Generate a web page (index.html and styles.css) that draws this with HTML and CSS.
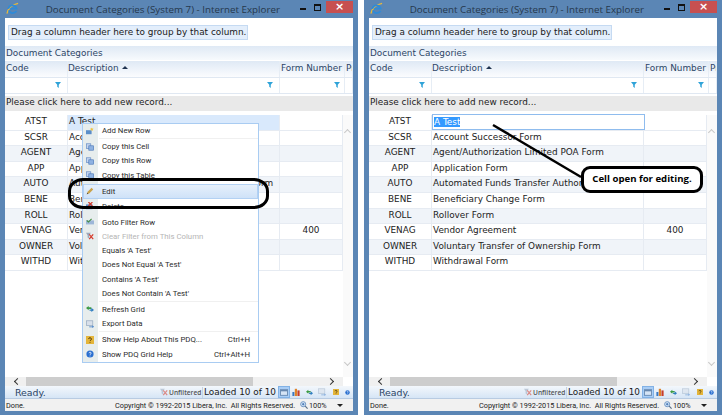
FILE: index.html
```html
<!DOCTYPE html>
<html lang="en">
<head>
  <meta charset="UTF-8" />
  <title>Document Categories</title>
  <link rel="stylesheet" href="styles.css">
</head>
<body>
  <svg class="defs" width="0" height="0">
    <symbol id="ie" viewBox="0 0 14 14">
      <path d="M1 12.5C2 8 6 3 13 1.5" fill="none" stroke="#e8b93a" stroke-width="1.3"/>
      <path d="M2.5 7.5a4.6 4.6 0 0 1 9 -.4H4.5M11.3 9.5a4.6 4.6 0 0 1 -8.3 -.5" fill="none" stroke="#2f8bd8" stroke-width="1.9"/>
    </symbol>
    <symbol id="funnel" viewBox="0 0 7 7">
      <path d="M0 0h7L4.4 3.2V7L2.6 5.6V3.2z" fill="#2fa3d8"/>
    </symbol>
    <symbol id="addrow" viewBox="0 0 10 10">
      <rect x="0" y="4" width="7" height="5" fill="#5b8ec9"/>
      <path d="M7 1l1 1 1.5 .2-1 1 .2 1.4L7 4l-1.2.6.2-1.4-1-1L6.500 2z" fill="#edc443"/>
    </symbol>
    <symbol id="copy" viewBox="0 0 10 10">
      <rect x="0.500" y="1" width="5.500" height="6" fill="#c6d6ee" stroke="#5d86c2" stroke-width=".8"/>
      <rect x="3.500" y="3.500" width="6" height="5.500" fill="#8fb2e2" stroke="#4a76b8" stroke-width=".8"/>
    </symbol>
    <symbol id="pencil" viewBox="0 0 10 10">
      <path d="M1 9l1-3 5-5 2 2-5 5z" fill="#c9a24a"/>
      <path d="M1 9l.6-1.800 1.200 1.200z" fill="#444"/>
    </symbol>
    <symbol id="del" viewBox="0 0 10 10">
      <rect x="0" y="3" width="8" height="6" fill="#5b8ec9"/>
      <path d="M3 0l5 5M8 0L3 5" stroke="#cf3a2a" stroke-width="1.500"/>
    </symbol>
    <symbol id="goto" viewBox="0 0 10 10">
      <rect x="0" y="3" width="10" height="5" fill="#9db7d8"/>
      <path d="M1 3l2 2 4-4" fill="none" stroke="#3c8a3c" stroke-width="1.300"/>
    </symbol>
    <symbol id="clear" viewBox="0 0 10 10">
      <path d="M0 1h6L4 4v4L2 7V4z" fill="#9aa9bd"/>
      <path d="M4 3l5 6M9 3L4 9" stroke="#d63a2a" stroke-width="1.500"/>
    </symbol>
    <symbol id="refresh" viewBox="0 0 9 9">
      <path d="M0 3.500L3 1v1.500h3v2H3V6z" fill="#3d9b45"/>
      <path d="M9 5.500L6 8V6.500H4v-1.500h2V3z" fill="#2f7ec0"/>
    </symbol>
    <symbol id="export" viewBox="0 0 10 10">
      <rect x="0.500" y="1" width="8" height="6" fill="#d8e0ea" stroke="#8fa3bb" stroke-width=".8"/>
      <path d="M4 8h4V6.500L10 8.500 8 10V9H4z" fill="#3a79c4"/>
    </symbol>
    <symbol id="help" viewBox="0 0 10 10">
      <rect x="0" y="0" width="10" height="10" fill="#e4b53a"/>
      <path d="M3.300 3.800A1.700 1.700 0 1 1 5.500 5.500L5 6.300M5 7.400v1" fill="none" stroke="#4a3508" stroke-width="1.200"/>
    </symbol>
    <symbol id="info" viewBox="0 0 10 10">
      <circle cx="5" cy="5" r="4.500" fill="#2a6fd0"/>
      <path d="M3.800 4A1.300 1.300 0 1 1 5.400 5.300L5 6M5 7v1" fill="none" stroke="#fff" stroke-width="1"/>
    </symbol>
    <symbol id="grid" viewBox="0 0 10 8">
      <rect x="0.500" y="0.500" width="9" height="7" fill="#d5e4f5" stroke="#5c7fa8"/>
      <rect x="1" y="1" width="8" height="1.500" fill="#5c7fa8"/>
    </symbol>
    <symbol id="chart" viewBox="0 0 9 10">
      <rect x="0" y="5" width="2.500" height="5" fill="#3a79c4"/>
      <rect x="3" y="1" width="2.800" height="9" fill="#e0832a"/>
      <rect x="6.300" y="3" width="2.700" height="7" fill="#c73d2a"/>
    </symbol>
    <symbol id="zoom" viewBox="0 0 10 10">
      <circle cx="4" cy="4" r="3.200" fill="#d4e5f7" stroke="#5b86bb"/>
      <path d="M2.500 4h3M4 2.500v3" stroke="#2f63a8"/>
      <path d="M6.500 6.500L9.500 9.500" stroke="#5b6f86" stroke-width="1.500"/>
    </symbol>
  </svg>

  <div class="window">
    <div class="titlebar">
      <svg class="ie-logo"><use href="#ie"/></svg>
      <div class="title">Document Categories (System 7) - Internet Explorer</div>
      <div class="win-min"></div>
      <div class="win-max"></div>
      <div class="win-close">×</div>
    </div>
    <div class="client">
      <div class="group-panel"><span class="group-hint">Drag a column header here to group by that column.</span></div>
      <div class="caption">Document Categories</div>
      <div class="cols header">
        <div>Code</div>
        <div>Description <span class="sort"></span></div>
        <div>Form Number</div>
        <div>Pr</div>
      </div>
      <div class="cols filter">
        <div><svg class="funnel"><use href="#funnel"/></svg></div>
        <div><svg class="funnel"><use href="#funnel"/></svg></div>
        <div><svg class="funnel"><use href="#funnel"/></svg></div>
        <div></div>
      </div>
      <div class="add-row">Please click here to add new record...</div>
      <div class="grid-area">
        <div class="rows">
          <div class="cols row"><div class="code">ATST</div><div class="selected">A Test</div><div></div></div>
          <div class="cols row"><div class="code">SCSR</div><div>Account Successor Form</div><div></div></div>
          <div class="cols row alt"><div class="code">AGENT</div><div>Agent/Authorization Limited POA Form</div><div></div></div>
          <div class="cols row"><div class="code">APP</div><div>Application Form</div><div></div></div>
          <div class="cols row alt"><div class="code">AUTO</div><div>Automated Funds Transfer Authorization Form</div><div></div></div>
          <div class="cols row"><div class="code">BENE</div><div>Beneficiary Change Form</div><div></div></div>
          <div class="cols row alt"><div class="code">ROLL</div><div>Rollover Form</div><div></div></div>
          <div class="cols row"><div class="code">VENAG</div><div>Vendor Agreement</div><div class="num">400</div></div>
          <div class="cols row alt"><div class="code">OWNER</div><div>Voluntary Transfer of Ownership Form</div><div></div></div>
          <div class="cols row"><div class="code">WITHD</div><div>Withdrawal Form</div><div></div></div>
        </div>
        <div class="vscroll"><span class="chev up"></span><span class="chev down"></span></div>
        <div class="menu">
          <div class="item"><svg class="mi"><use href="#addrow"/></svg>Add New Row</div>
          <div class="sep"></div>
          <div class="item"><svg class="mi"><use href="#copy"/></svg>Copy this Cell</div>
          <div class="item"><svg class="mi"><use href="#copy"/></svg>Copy this Row</div>
          <div class="item"><svg class="mi"><use href="#copy"/></svg>Copy this Table</div>
          <div class="item hot"><svg class="mi"><use href="#pencil"/></svg>Edit</div>
          <div class="item"><svg class="mi"><use href="#del"/></svg>Delete</div>
          <div class="sep"></div>
          <div class="item"><svg class="mi"><use href="#goto"/></svg>Goto Filter Row</div>
          <div class="item off"><svg class="mi"><use href="#clear"/></svg>Clear Filter from This Column</div>
          <div class="item"><span class="mi"></span>Equals 'A Test'</div>
          <div class="item"><span class="mi"></span>Does Not Equal 'A Test'</div>
          <div class="item"><span class="mi"></span>Contains 'A Test'</div>
          <div class="item"><span class="mi"></span>Does Not Contain 'A Test'</div>
          <div class="sep"></div>
          <div class="item"><svg class="mi"><use href="#refresh"/></svg>Refresh Grid</div>
          <div class="item"><svg class="mi"><use href="#export"/></svg>Export Data</div>
          <div class="sep"></div>
          <div class="item"><svg class="mi"><use href="#help"/></svg>Show Help About This PDQ...<span class="keys">Ctrl+H</span></div>
          <div class="item"><svg class="mi"><use href="#info"/></svg>Show PDQ Grid Help<span class="keys">Ctrl+Alt+H</span></div>
        </div>
        <div class="mark-edit"></div>
      </div>
      <div class="hscroll"><span class="chev left"></span><div class="thumb"></div><span class="chev right"></span></div>
      <div class="statusbar">
        <div class="ready">Ready.</div>
        <svg class="si faded"><use href="#clear"/></svg><span class="unfiltered">Unfiltered</span>
        <span class="loaded">Loaded 10 of 10</span>
        <span class="si-box"><svg class="si-grid"><use href="#grid"/></svg></span>
        <svg class="si"><use href="#chart"/></svg>
        <svg class="si s-refresh"><use href="#refresh"/></svg>
        <svg class="si s-export faded"><use href="#export"/></svg>
        <svg class="si s-help"><use href="#help"/></svg>
        <svg class="si s-info"><use href="#info"/></svg>
      </div>
      <div class="iebar">
        <div class="done">Done.</div>
        <div class="copyright">Copyright © 1992-2015 Libera, Inc.&nbsp; All Rights Reserved.</div>
        <svg class="si zoom"><use href="#zoom"/></svg><span class="zoom-val">100%</span>
        <span class="drop"></span>
        <span class="grip"></span>
      </div>
    </div>
  </div>

  <div class="window">
    <div class="titlebar">
      <svg class="ie-logo"><use href="#ie"/></svg>
      <div class="title">Document Categories (System 7) - Internet Explorer</div>
      <div class="win-min"></div>
      <div class="win-max"></div>
      <div class="win-close">×</div>
    </div>
    <div class="client">
      <div class="group-panel"><span class="group-hint">Drag a column header here to group by that column.</span></div>
      <div class="caption">Document Categories</div>
      <div class="cols header">
        <div>Code</div>
        <div>Description <span class="sort"></span></div>
        <div>Form Number</div>
        <div>Pr</div>
      </div>
      <div class="cols filter">
        <div><svg class="funnel"><use href="#funnel"/></svg></div>
        <div><svg class="funnel"><use href="#funnel"/></svg></div>
        <div><svg class="funnel"><use href="#funnel"/></svg></div>
        <div></div>
      </div>
      <div class="add-row">Please click here to add new record...</div>
      <div class="grid-area">
        <div class="rows">
          <div class="cols row"><div class="code">ATST</div><div class="editor"><span class="picked">A Test</span></div><div></div></div>
          <div class="cols row"><div class="code">SCSR</div><div>Account Successor Form</div><div></div></div>
          <div class="cols row alt"><div class="code">AGENT</div><div>Agent/Authorization Limited POA Form</div><div></div></div>
          <div class="cols row"><div class="code">APP</div><div>Application Form</div><div></div></div>
          <div class="cols row alt"><div class="code">AUTO</div><div>Automated Funds Transfer Authorization Form</div><div></div></div>
          <div class="cols row"><div class="code">BENE</div><div>Beneficiary Change Form</div><div></div></div>
          <div class="cols row alt"><div class="code">ROLL</div><div>Rollover Form</div><div></div></div>
          <div class="cols row"><div class="code">VENAG</div><div>Vendor Agreement</div><div class="num">400</div></div>
          <div class="cols row alt"><div class="code">OWNER</div><div>Voluntary Transfer of Ownership Form</div><div></div></div>
          <div class="cols row"><div class="code">WITHD</div><div>Withdrawal Form</div><div></div></div>
        </div>
        <div class="vscroll"><span class="chev up"></span><span class="chev down"></span></div>
        <svg class="pointer" width="100" height="60"><path d="M2 2L90 54" stroke="#000" stroke-width="2.500"/></svg>
        <div class="callout">Cell open for editing.</div>
      </div>
      <div class="hscroll"><span class="chev left"></span><div class="thumb"></div><span class="chev right"></span></div>
      <div class="statusbar">
        <div class="ready">Ready.</div>
        <svg class="si faded"><use href="#clear"/></svg><span class="unfiltered">Unfiltered</span>
        <span class="loaded">Loaded 10 of 10</span>
        <span class="si-box"><svg class="si-grid"><use href="#grid"/></svg></span>
        <svg class="si"><use href="#chart"/></svg>
        <svg class="si s-refresh"><use href="#refresh"/></svg>
        <svg class="si s-export faded"><use href="#export"/></svg>
        <svg class="si s-help"><use href="#help"/></svg>
        <svg class="si s-info"><use href="#info"/></svg>
      </div>
      <div class="iebar">
        <div class="done">Done.</div>
        <div class="copyright">Copyright © 1992-2015 Libera, Inc.&nbsp; All Rights Reserved.</div>
        <svg class="si zoom"><use href="#zoom"/></svg><span class="zoom-val">100%</span>
        <span class="drop"></span>
        <span class="grip"></span>
      </div>
    </div>
  </div>
</body>
</html>
```

FILE: styles.css
```css
html, body {
  margin: 0;
  padding: 0;
}
body {
  width: 722px;
  height: 416px;
  overflow: hidden;
  background: #fff;
  display: flex;
  justify-content: space-between;
  font-family: "DejaVu Sans", sans-serif;
  font-size: 8.9px;
  color: #222;
}
.defs {
  position: absolute;
}
.window {
  width: 358px;
  height: 415px;
  box-sizing: border-box;
  padding: 0 5px 4px;
  background: #5b86b5;
  display: flex;
  flex-direction: column;
}
.titlebar {
  height: 18px;
  flex: none;
  display: flex;
  align-items: flex-start;
}
.ie-logo {
  width: 13px;
  height: 13px;
  margin: 2px 0 0 1px;
  flex: none;
}
.title {
  width: 265px;
  padding-top: 3px;
  text-align: right;
  font-family: "Open Sans", sans-serif;
  font-size: 9.8px;
  line-height: 13px;
  color: #26384c;
  white-space: nowrap;
}
.win-min {
  width: 6px;
  height: 2px;
  margin: 8px 0 0 20px;
  background: #111;
  flex: none;
}
.win-max {
  width: 5px;
  height: 4px;
  margin: 4px 0 0 8px;
  border: 1px solid #111;
  border-top-width: 2px;
  flex: none;
}
.win-close {
  width: 27px;
  height: 12px;
  margin: 1px 0 0 5px;
  background: #c75050;
  color: #fff;
  font-size: 11px;
  font-weight: bold;
  line-height: 12px;
  text-align: center;
  flex: none;
}
.client {
  flex: 1;
  min-height: 0;
  background: #fff;
  display: flex;
  flex-direction: column;
  overflow: hidden;
}
.group-panel {
  height: 28px;
  flex: none;
  box-sizing: border-box;
  padding: 7px 0 0 3px;
}
.group-hint {
  display: inline-block;
  height: 15px;
  box-sizing: border-box;
  padding: 0 1px 0 2px;
  background: #e3eefb;
  border: 1px solid #c5daf2;
  line-height: 13px;
  color: #1a1a1a;
  white-space: nowrap;
}
.caption {
  height: 14px;
  flex: none;
  margin-bottom: 1px;
  background: linear-gradient(#dfe9f5, #f7fafd);
  color: #2c4566;
  line-height: 14px;
  padding-left: 1px;
}
.cols {
  display: grid;
  grid-template-columns: 63px 212px 65px 8px;
}
.header {
  height: 16px;
  flex: none;
  background: linear-gradient(#dfe9f5, #fbfcfe);
  color: #2c4566;
  line-height: 15px;
  border-bottom: 1px solid #e0e8f2;
}
.header > div {
  padding-left: 1px;
  border-right: 1px solid #e6edf5;
  white-space: nowrap;
  overflow: hidden;
}
.header > div:nth-child(2) {
  padding-left: 0;
}
.sort {
  display: inline-block;
  vertical-align: 2px;
  margin-left: 1px;
  border-left: 3px solid transparent;
  border-right: 3px solid transparent;
  border-bottom: 3px solid #1f3350;
}
.filter {
  height: 15px;
  flex: none;
  border-bottom: 1px solid #e0e8f2;
}
.filter > div {
  border-right: 1px solid #e6edf5;
  display: flex;
  justify-content: flex-end;
  align-items: center;
  padding: 0 6px 1px 0;
}
.filter > div:nth-child(3) {
  padding-right: 4px;
}
.funnel {
  width: 6px;
  height: 6px;
}
.add-row {
  height: 15px;
  flex: none;
  margin-top: 2px;
  background: #e9e9e9;
  color: #222;
  line-height: 13px;
  padding-left: 1px;
}
.grid-area {
  height: 266px;
  flex: none;
  position: relative;
  padding-top: 4px;
  box-sizing: border-box;
  display: flex;
}
.rows {
  width: 338px;
  flex: none;
}
.row {
  height: 15.6px;
  grid-template-columns: 63px 212px 63px;
  box-sizing: border-box;
  border-bottom: 1px solid #e6ebf2;
  line-height: 13px;
  color: #222;
}
.row > div {
  border-right: 1px solid #e6ebf2;
  padding-left: 1px;
  white-space: nowrap;
}
.row.alt {
  background: #f0f4f9;
}
.row .code {
  padding-left: 0;
  text-align: center;
}
.row .num {
  text-align: center;
  padding-left: 0;
}
.row .selected {
  background: #d9e9fc;
}
.row .editor {
  margin: -1px -1px 0 0;
  height: 16px;
  box-sizing: border-box;
  background: #fff;
  border: 1px solid #8fbcee;
  line-height: 14px;
}
.picked {
  background: #3399ff;
  color: #fff;
}
.vscroll {
  flex: 1;
  position: relative;
  background: #fafafa;
}
.chev {
  position: absolute;
  width: 5px;
  height: 5px;
  box-sizing: border-box;
  border-top: 1.5px solid #333;
  border-left: 1.5px solid #333;
}
.vscroll .chev {
  border-color: #c8c8c8;
  left: 2px;
}
.chev.up {
  top: 15px;
  transform: rotate(45deg);
}
.chev.down {
  bottom: 12px;
  transform: rotate(225deg);
}
.hscroll {
  height: 9px;
  flex: none;
  position: relative;
  background: #f0f0f0;
  width: 338px;
}
.thumb {
  position: absolute;
  left: 21px;
  top: 0;
  width: 227px;
  height: 9px;
  background: #cdcdcd;
}
.chev.left {
  left: 10px;
  top: 2px;
  transform: rotate(-45deg);
}
.chev.right {
  right: 10px;
  top: 2px;
  transform: rotate(135deg);
}
.statusbar {
  height: 13px;
  flex: none;
  box-sizing: border-box;
  background: linear-gradient(#f3f7fc, #d6e5f6);
  border-bottom: 1px solid #b8cbe2;
  display: flex;
  align-items: center;
}
.ready {
  margin-left: 10px;
  width: 145px;
  font-size: 9.4px;
  color: #2c4566;
  flex: none;
}
.si {
  width: 8px;
  height: 8px;
  flex: none;
}
.faded {
  opacity: .55;
}
.unfiltered {
  margin-left: 1px;
  width: 34px;
  box-sizing: border-box;
  font-family: "Open Sans", sans-serif;
  font-size: 6.6px;
  font-weight: 600;
  line-height: 11px;
  color: #555;
  white-space: nowrap;
  border-right: 1px solid #c5d3e4;
  flex: none;
}
.loaded {
  margin-left: 1px;
  width: 74px;
  font-size: 8.9px;
  white-space: nowrap;
  color: #1a1a1a;
  flex: none;
}
.si-box {
  width: 12px;
  height: 12px;
  background: #a9cdf5;
  border: 1px solid #82b2e6;
  box-sizing: border-box;
  display: flex;
  align-items: center;
  justify-content: center;
  margin-right: 2px;
  flex: none;
}
.si-grid {
  width: 8px;
  height: 7px;
}
.s-refresh {
  width: 7px;
  height: 7px;
  margin-left: 6px;
}
.s-export {
  margin-left: 5px;
}
.s-help {
  width: 6px;
  height: 6px;
  margin-left: 7px;
}
.s-info {
  width: 5px;
  height: 5px;
  margin-left: 6px;
}
.iebar {
  flex: 1;
  min-height: 0;
  background: #f1f1f1;
  display: flex;
  align-items: center;
  font-family: Roboto, sans-serif;
  font-size: 7.3px;
  color: #222;
}
.done {
  margin-left: 1px;
  width: 109px;
  flex: none;
}
.copyright {
  width: 185px;
  white-space: nowrap;
  flex: none;
}
.zoom {
  margin-right: 1px;
}
.zoom-val {
  width: 28px;
  flex: none;
}
.drop {
  border-left: 3px solid transparent;
  border-right: 3px solid transparent;
  border-top: 3px solid #222;
  flex: none;
}
.grip {
  width: 5px;
  height: 5px;
  margin: 6px 0 0 6px;
  background: radial-gradient(#aaa 35%, transparent 40%) 0 0 / 2px 2px;
  flex: none;
}
/* right click menu, sits over the rows */
.menu {
  position: absolute;
  left: 77px;
  top: 12px;
  width: 177px;
  box-sizing: border-box;
  border: 1px solid #a9ccf2;
  background: linear-gradient(90deg, #e7eded 15px, #fff 15px);
  font-family: Roboto, sans-serif;
  font-size: 7.8px;
  color: #2b2b2b;
}
.item {
  height: 14.3px;
  padding-bottom: 1px;
  display: flex;
  align-items: center;
  box-sizing: border-box;
  white-space: nowrap;
}
.item.hot {
  background: linear-gradient(#e6f0fb, #cfe2f8);
  border: 1px solid #b3d1f3;
  height: 15px;
  margin-top: 1.5px;
}
.item.hot .mi {
  margin-left: 2px;
}
.item.off {
  color: #b5b5b5;
}
.mi {
  width: 8px;
  height: 8px;
  margin: 0 8px 0 3px;
  flex: none;
  display: block;
}
.keys {
  margin-left: auto;
  padding-right: 8px;
}
.sep {
  height: 1.7px;
  margin-left: 16px;
  background: linear-gradient(#f0f0f0 50%, #fff 50%);
}
.mark-edit {
  position: absolute;
  left: 63px;
  top: 67px;
  width: 201px;
  height: 31px;
  box-sizing: border-box;
  border: 3.5px solid #000;
  border-radius: 15px / 13px;
}
.pointer {
  position: absolute;
  left: 122px;
  top: 12px;
}
.callout {
  position: absolute;
  left: 212px;
  top: 55px;
  width: 122px;
  height: 27px;
  box-sizing: border-box;
  background: #fff;
  border: 3px solid #000;
  border-radius: 9px;
  font-family: "Open Sans", sans-serif;
  font-size: 9.6px;
  font-weight: bold;
  line-height: 20px;
  text-align: center;
  color: #000;
  white-space: nowrap;
}
```
